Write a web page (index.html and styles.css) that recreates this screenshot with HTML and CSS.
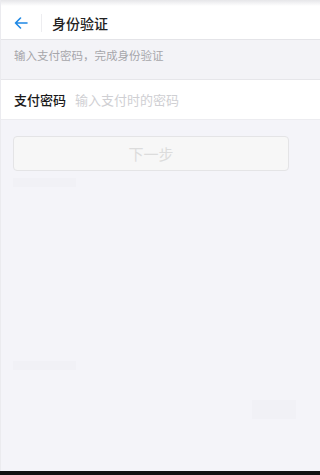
FILE: index.html
```html
<!DOCTYPE html>
<html lang="zh-CN">
<head>
<meta charset="utf-8">
<meta name="viewport" content="width=device-width, initial-scale=1">
<link rel="stylesheet" href="styles.css">
</head>
<body>
<div class="screen">
  <div class="statusbar"></div>
  <header class="navbar">
    <span class="back">
      <svg width="14" height="12" viewBox="0 0 14 12"><path d="M13 6H1.5M6.5 1L1.5 6l5 5" fill="none" stroke="#1e88e5" stroke-width="1.6" stroke-linecap="round" stroke-linejoin="round"/></svg>
    </span>
    <span class="sep"></span>
    <h1 class="title">身份验证</h1>
  </header>
  <div class="hint">输入支付密码，完成身份验证</div>
  <div class="field">
    <span class="label">支付密码</span>
    <span class="placeholder">输入支付时的密码</span>
  </div>
  <div class="content">
    <button class="next" disabled>下一步</button>
    <div class="ghost ghost-a"></div>
    <div class="ghost ghost-b"></div>
    <div class="ghost ghost-c"></div>
  </div>
  <div class="bottombar"></div>
</div>
</body>
</html>
```
FILE: styles.css
```css
html, body {
  margin: 0;
  padding: 0;
  background: #f4f4f9;
}
body {
  height: 475px;
  overflow: hidden;
  font-family: "Noto Sans CJK SC", "Noto Sans", sans-serif;
}
.screen {
  display: flex;
  flex-direction: column;
  height: 475px;
  border-left: 1px solid #ebebef;
  box-sizing: border-box;
}
.statusbar {
  height: 6px;
  background: linear-gradient(#e6e6e9, #ffffff);
}
.navbar {
  height: 33px;
  background: #fff;
  border-bottom: 1px solid #e4e4e8;
  display: flex;
  align-items: center;
  padding-left: 13px;
}
.back {
  display: flex;
  width: 14px;
  height: 12px;
  margin-top: 1px;
}
.sep {
  width: 1px;
  height: 18px;
  background: #ededf0;
  margin-left: 13px;
  margin-right: 10px;
}
.title {
  margin: 0;
  font-size: 14px;
  font-weight: 500;
  color: #222;
  line-height: 1;
}
.hint {
  height: 40px;
  box-sizing: border-box;
  border-bottom: 1px solid #e6e6ea;
  padding: 7px 0 0 13px;
  line-height: 16px;
  font-size: 11.5px;
  color: #a6a6ab;
  background: #f3f3f7;
}
.field {
  height: 40px;
  box-sizing: border-box;
  background: #fff;
  border-bottom: 1px solid #ececf0;
  display: flex;
  align-items: center;
  padding-left: 13px;
  font-size: 13px;
}
.label {
  color: #1a1a1a;
  font-weight: 500;
  width: 61px;
}
.placeholder {
  color: #cfcfd3;
}
.content {
  flex: 1;
  position: relative;
  padding: 16px 10px 0 12px;
}
.next {
  display: block;
  width: 276px;
  height: 35px;
  border: 1px solid #e4e4e6;
  border-radius: 4px;
  background: #f7f7f7;
  color: #dcdcdc;
  font-family: inherit;
  font-size: 15px;
  padding: 0;
}
.ghost {
  position: absolute;
  background: #f1f1f6;
}
.ghost-a { left: 12px; top: 58px; width: 63px; height: 9px; }
.ghost-b { left: 12px; top: 241px; width: 63px; height: 9px; }
.ghost-c { left: 251px; top: 280px; width: 44px; height: 19px; }
.bottombar {
  height: 4px;
  background: #111;
  margin-left: -1px;
}
```
